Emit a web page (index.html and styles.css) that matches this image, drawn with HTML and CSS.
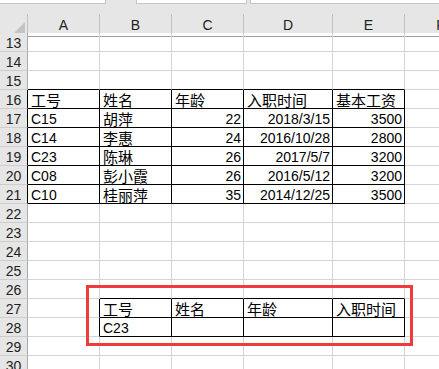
FILE: index.html
```html
<!DOCTYPE html>
<html lang="zh">
<head>
<meta charset="utf-8">
<title>Sheet</title>
<link rel="stylesheet" href="styles.css">
</head>
<body>
<div class="app">
  <div class="topbar">
    <div class="box box-name"></div>
    <div class="box box-mid"></div>
    <div class="box box-formula"></div>
  </div>
  <div class="colhead">
    <div class="corner"><span class="tri"></span></div>
    <div class="ch">A</div><div class="ch">B</div><div class="ch">C</div><div class="ch">D</div><div class="ch">E</div><div class="ch">F</div>
  </div>
  <div class="sheet">
    <div class="row"><div class="rh">13</div><div class="c"></div><div class="c"></div><div class="c"></div><div class="c"></div><div class="c"></div><div class="c"></div></div>
    <div class="row"><div class="rh">14</div><div class="c"></div><div class="c"></div><div class="c"></div><div class="c"></div><div class="c"></div><div class="c"></div></div>
    <div class="row"><div class="rh">15</div><div class="c tt"></div><div class="c tt"></div><div class="c tt"></div><div class="c tt"></div><div class="c tt"></div><div class="c"></div></div>
    <div class="row"><div class="rh tl">16</div><div class="c t zh">工号</div><div class="c t zh">姓名</div><div class="c t zh">年龄</div><div class="c t zh">入职时间</div><div class="c t zh">基本工资</div><div class="c"></div></div>
    <div class="row"><div class="rh tl">17</div><div class="c t">C15</div><div class="c t zh">胡萍</div><div class="c t n">22</div><div class="c t n">2018/3/15</div><div class="c t n">3500</div><div class="c"></div></div>
    <div class="row"><div class="rh tl">18</div><div class="c t">C14</div><div class="c t zh">李惠</div><div class="c t n">24</div><div class="c t n">2016/10/28</div><div class="c t n">2800</div><div class="c"></div></div>
    <div class="row"><div class="rh tl">19</div><div class="c t">C23</div><div class="c t zh">陈琳</div><div class="c t n">26</div><div class="c t n">2017/5/7</div><div class="c t n">3200</div><div class="c"></div></div>
    <div class="row"><div class="rh tl">20</div><div class="c t">C08</div><div class="c t zh">彭小霞</div><div class="c t n">26</div><div class="c t n">2016/5/12</div><div class="c t n">3200</div><div class="c"></div></div>
    <div class="row"><div class="rh tl">21</div><div class="c t">C10</div><div class="c t zh">桂丽萍</div><div class="c t n">35</div><div class="c t n">2014/12/25</div><div class="c t n">3500</div><div class="c"></div></div>
    <div class="row"><div class="rh">22</div><div class="c"></div><div class="c"></div><div class="c"></div><div class="c"></div><div class="c"></div><div class="c"></div></div>
    <div class="row"><div class="rh">23</div><div class="c"></div><div class="c"></div><div class="c"></div><div class="c"></div><div class="c"></div><div class="c"></div></div>
    <div class="row"><div class="rh">24</div><div class="c"></div><div class="c"></div><div class="c"></div><div class="c"></div><div class="c"></div><div class="c"></div></div>
    <div class="row"><div class="rh">25</div><div class="c"></div><div class="c"></div><div class="c"></div><div class="c"></div><div class="c"></div><div class="c"></div></div>
    <div class="row"><div class="rh">26</div><div class="c"></div><div class="c tt"></div><div class="c tt"></div><div class="c tt"></div><div class="c tt"></div><div class="c"></div></div>
    <div class="row"><div class="rh">27</div><div class="c tl"></div><div class="c t zh">工号</div><div class="c t zh">姓名</div><div class="c t zh">年龄</div><div class="c t zh">入职时间</div><div class="c"></div></div>
    <div class="row"><div class="rh">28</div><div class="c tl"></div><div class="c t">C23</div><div class="c t"></div><div class="c t"></div><div class="c t"></div><div class="c"></div></div>
    <div class="row"><div class="rh">29</div><div class="c"></div><div class="c"></div><div class="c"></div><div class="c"></div><div class="c"></div><div class="c"></div></div>
    <div class="row"><div class="rh">30</div><div class="c"></div><div class="c"></div><div class="c"></div><div class="c"></div><div class="c"></div><div class="c"></div></div>
  </div>
  <div class="highlight"></div>
</div>
</body>
</html>
```
FILE: styles.css
```css
html, body {
  margin: 0;
  padding: 0;
  background: #fff;
}
body {
  width: 439px;
  height: 369px;
  overflow: hidden;
  font-family: "Liberation Sans", "Noto Sans CJK SC", sans-serif;
  font-size: 14px;
  color: #000;
}
.app {
  position: relative;
  width: 477px;
  background: #e6e6e6;
}
.topbar {
  display: flex;
  width: 439px;
  height: 14px;
  align-items: flex-start;
}
.box {
  height: 4px;
  box-sizing: border-box;
  background: #fff;
  border: 1px solid #c6c6c6;
  border-top: none;
}
.box-name {
  width: 106px;
  border-left: none;
}
.box-mid {
  width: 111px;
  margin-left: 30px;
}
.box-formula {
  flex: 1;
  margin-left: 3px;
  border-right: none;
}
.colhead,
.row {
  display: grid;
  grid-template-columns: 28px 72px 72px 72px 89px 72px 72px;
}
.colhead {
  height: 19px;
}
.corner {
  box-sizing: border-box;
  border-right: 1px solid #c2c2c2;
  border-bottom: 1px solid #9e9e9e;
  display: flex;
  justify-content: flex-end;
  align-items: flex-end;
  padding: 0 2px 2px 0;
}
.tri {
  width: 0;
  height: 0;
  border-left: 12px solid transparent;
  border-bottom: 12px solid #c4c4c4;
}
.ch {
  box-sizing: border-box;
  border-right: 1px solid #c2c2c2;
  border-bottom: 1px solid #9e9e9e;
  text-align: center;
  line-height: 22px;
  color: #222;
}
.sheet {
  background: #fff;
}
.row {
  height: 19px;
}
.rh,
.c {
  box-sizing: border-box;
  height: 19px;
  line-height: 21px;
  white-space: nowrap;
}
.rh {
  background: #e6e6e6;
  border-right: 1px solid #ababab;
  border-bottom: 1px solid #cdcdcd;
  text-align: center;
  color: #222;
}
.c {
  border-right: 1px solid #d4d4d4;
  border-bottom: 1px solid #d4d4d4;
  padding: 0 2px 0 3px;
}
.c.t {
  border-right-color: #000;
  border-bottom-color: #000;
}
.c.tt {
  border-bottom-color: #000;
}
.rh.tl,
.c.tl {
  border-right-color: #000;
}
.zh {
  font-size: 15px;
}
.n {
  text-align: right;
}
.highlight {
  position: absolute;
  left: 86px;
  top: 285px;
  width: 327px;
  height: 61px;
  box-sizing: border-box;
  border: 3px solid #ef3b3b;
}
```
